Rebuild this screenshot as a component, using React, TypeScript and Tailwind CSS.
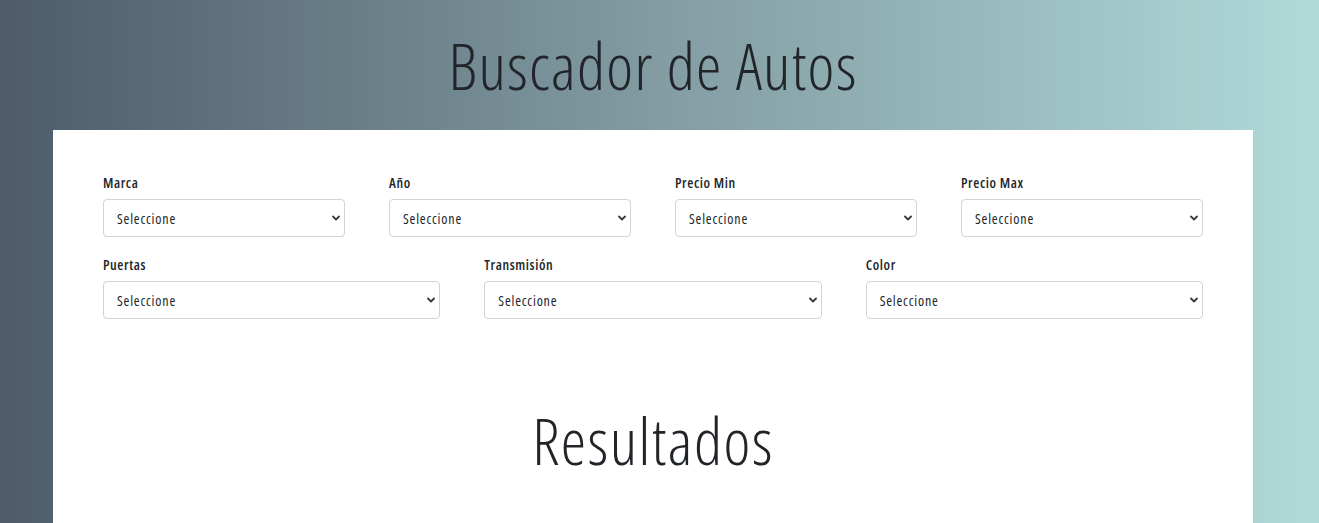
import React from "react";

const font = { fontFamily: '"Open Sans", "Noto Sans", sans-serif', fontStretch: "75%" };

function Chevron() {
  return (
    <svg className="pointer-events-none absolute right-[5px] top-1/2 -translate-y-1/2" width="8" height="8" viewBox="0 0 16 16" fill="none">
      <path d="M2 5l6 6 6-6" stroke="#343a40" strokeWidth="3.6" strokeLinecap="round" strokeLinejoin="round" />
    </svg>
  );
}

function Field({ label }: { label: string }) {
  return (
    <div className="flex flex-col">
      <label className="text-[14px] leading-[20px] font-semibold tracking-[0.6px] text-[#212529] mb-[6px]">{label}</label>
      <div className="relative">
        <select className="appearance-none w-full h-[38px] rounded-[4px] border border-[#ced4da] bg-white pl-[13px] pr-8 text-[14px] tracking-[0.8px] text-[#212529] outline-none" style={font}>
          <option>Seleccione</option>
        </select>
        <Chevron />
      </div>
    </div>
  );
}

export default function App() {
  return (
    <div className="min-h-[523px] bg-gradient-to-r from-[#4e5c6a] via-[#829ca2] to-[#b1dad9] overflow-hidden" style={font}>
      <div className="w-[1306px]">
        <div className="h-[130px] flex items-center justify-center pt-[1px]">
          <h1 className="text-[64px] font-light tracking-[1.3px] text-[#212529] leading-none">Buscador de Autos</h1>
        </div>
        <div className="mx-[53px] bg-white px-[50px] pt-[43px] pb-[60px]">
          <div className="grid grid-cols-4 gap-x-[44px]">
            <Field label="Marca" />
            <Field label="Año" />
            <Field label="Precio Min" />
            <Field label="Precio Max" />
          </div>
          <div className="grid grid-cols-3 gap-x-[44px] mt-[18px]">
            <Field label="Puertas" />
            <Field label="Transmisión" />
            <Field label="Color" />
          </div>
          <h2 className="mt-[83px] text-center text-[64px] font-light tracking-[1.5px] text-[#212529] leading-[77px]">Resultados</h2>
        </div>
      </div>
    </div>
  );
}
